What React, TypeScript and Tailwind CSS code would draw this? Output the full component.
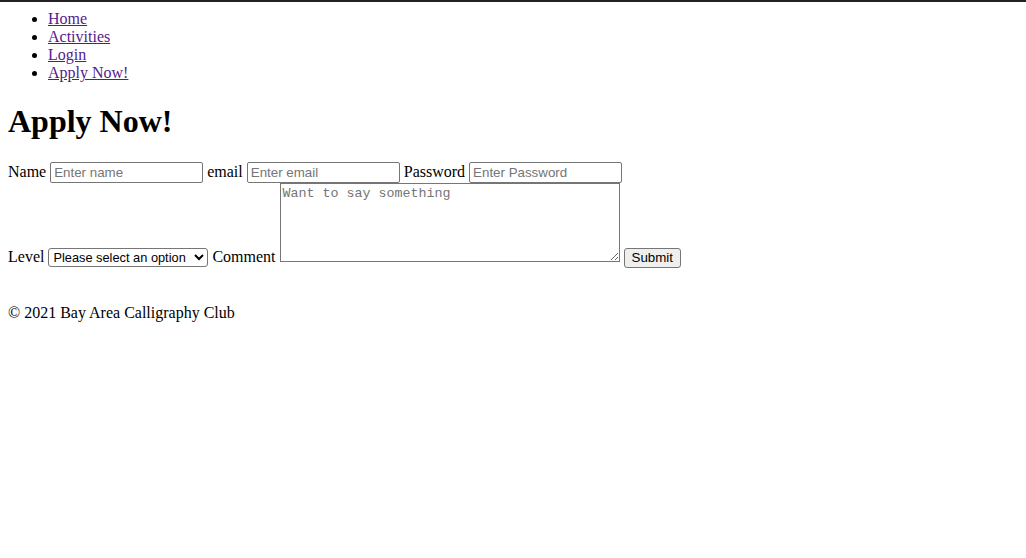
export default function App() {
  const inputCls =
    "inline-block align-baseline w-[153px] h-[21px] border border-[#767676] rounded-[2px] pl-[3px] pr-[2px] py-[1px] text-[13.33px] font-['Liberation_Sans',Arial,sans-serif] text-black placeholder:text-[#757575] bg-white";
  return (
    <div className="font-['Liberation_Serif','Times_New_Roman',serif] text-[16px] text-black bg-white min-h-[558px]">
      <div className="border-t-2 border-[#222]" />
      <div className="px-2">
        <ul className="list-disc pl-10 mt-[8px] leading-[18px]">
          <li><a href="#" className="underline text-[#551a8b]">Home</a></li>
          <li><a href="#" className="underline text-[#551a8b]">Activities</a></li>
          <li><a href="#" className="underline text-[#551a8b]">Login</a></li>
          <li><a href="#" className="underline text-[#551a8b]">Apply Now!</a></li>
        </ul>
        <h1 className="text-[32px] font-bold leading-[37px] mt-[21px] mb-[22px]">Apply Now!</h1>
        <form className="leading-[18px]" onSubmit={(e) => e.preventDefault()}>
          <label>Name </label>
          <input className={inputCls} placeholder="Enter name" />{" "}
          <label>email </label>
          <input className={inputCls} placeholder="Enter email" />{" "}
          <label>Password </label>
          <input className={inputCls} type="password" placeholder="Enter Password" />
          <br />
          <label>Level </label>
          <select className="inline-block align-baseline w-[160px] h-[19px] border border-[#767676] rounded-[3px] pl-0 text-[12.8px] font-['Liberation_Sans',Arial,sans-serif] bg-white text-black">
            <option>Please select an option</option>
          </select>{" "}
          <label>Comment </label>
          <textarea
            className="inline-block align-baseline w-[340px] h-[79px] border border-[#767676] p-[2px] text-[13.33px] leading-[15px] font-['Liberation_Mono','Courier_New',monospace] placeholder:text-[#757575] resize"
            placeholder="Want to say something"
          />{" "}
          <button className="inline-block align-baseline h-[20px] px-[7px] border border-[#767676] rounded-[3px] bg-[#efefef] text-[13.33px] font-['Liberation_Sans',Arial,sans-serif] leading-[16px]">
            Submit
          </button>
        </form>
        <p className="mt-[36px] leading-[18px]">© 2021 Bay Area Calligraphy Club</p>
      </div>
    </div>
  );
}
